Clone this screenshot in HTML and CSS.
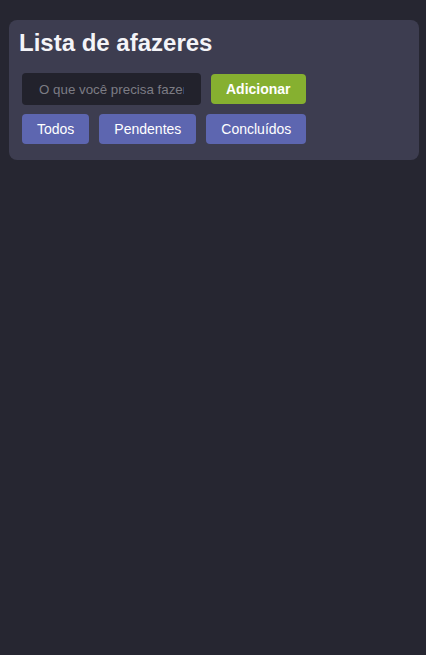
FILE: index.html
```html
<!DOCTYPE html>
<html lang="pt-BR">
<head>
<meta charset="utf-8">
<title>Lista de afazeres</title>
<link rel="stylesheet" href="styles.css">
</head>
<body>
<main class="card">
  <h1 class="title">Lista de afazeres</h1>
  <div class="controls">
    <form class="add-row" onsubmit="return false">
      <input class="task-input" type="text" placeholder="O que você precisa fazer?">
      <button class="btn btn-add" type="submit">Adicionar</button>
    </form>
    <div class="filters">
      <button class="btn btn-filter" type="button">Todos</button>
      <button class="btn btn-filter" type="button">Pendentes</button>
      <button class="btn btn-filter" type="button">Concluídos</button>
    </div>
  </div>
</main>
</body>
</html>
```
FILE: styles.css
```css
* { box-sizing: border-box; }
html, body {
  margin: 0;
  padding: 0;
  background: #262631;
  font-family: "Liberation Sans", Arial, sans-serif;
  color: #ffffff;
}
body {
  padding: 20px 7px 0 9px;
  min-height: 655px;
}
.card {
  background: #3d3d50;
  border-radius: 8px;
  padding: 9px 10px 16px 10px;
}
.title {
  margin: 0 0 16px 0;
  font-size: 24px;
  line-height: 28px;
  font-weight: bold;
  color: #f4f4f8;
}
.controls {
  margin-left: 3px;
  display: flex;
  flex-direction: column;
  gap: 9px;
}
.add-row {
  margin: 0;
  display: flex;
  align-items: center;
  gap: 10px;
}
.task-input {
  width: 179px;
  height: 32px;
  border: none;
  outline: none;
  border-radius: 4px;
  background: #22222c;
  color: #ddd;
  padding: 0 17px;
  font-family: "Liberation Sans", Arial, sans-serif;
  font-size: 13.33px;
}
.task-input::placeholder {
  color: #7c7c84;
}
.filters {
  display: flex;
  gap: 10px;
}
.btn {
  height: 30px;
  padding: 0 15px;
  border: none;
  border-radius: 4px;
  color: #ffffff;
  font-family: "Liberation Sans", Arial, sans-serif;
  font-size: 14px;
  cursor: pointer;
}
.btn-add {
  background: #86b030;
  font-weight: bold;
}
.btn-filter {
  background: #5d66b0;
}
```
